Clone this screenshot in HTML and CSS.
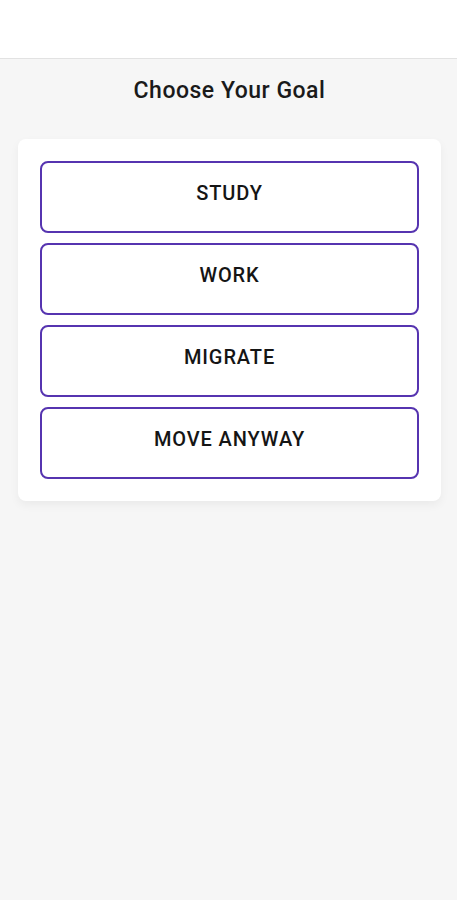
FILE: index.html
```html
<!DOCTYPE html>
<html>
<head>
<meta charset="utf-8">
<link rel="stylesheet" href="styles.css">
</head>
<body>
<header class="topbar"></header>
<main class="content">
  <h1 class="title">Choose Your Goal</h1>
  <section class="card">
    <button class="goal">STUDY</button>
    <button class="goal">WORK</button>
    <button class="goal">MIGRATE</button>
    <button class="goal">MOVE ANYWAY</button>
  </section>
</main>
</body>
</html>
```
FILE: styles.css
```css
html, body {
  margin: 0;
  padding: 0;
}
body {
  background: #f6f6f6;
  font-family: Roboto, "Noto Sans", "Liberation Sans", sans-serif;
  color: #151515;
  min-height: 900px;
}
.topbar {
  height: 58px;
  background: #ffffff;
  border-bottom: 1px solid #e2e2e2;
}
.content {
  padding: 0 16px 0 18px;
}
.title {
  margin: 0;
  padding-top: 19px;
  height: 61px;
  box-sizing: border-box;
  text-align: center;
  font-size: 23px;
  font-weight: 500;
  line-height: 26px;
  letter-spacing: 0.5px;
  color: #1a1a1a;
}
.card {
  margin-top: 19px;
  background: #ffffff;
  border-radius: 8px;
  padding: 22px;
  display: flex;
  flex-direction: column;
  gap: 10px;
  box-shadow: 0 4px 10px rgba(0, 0, 0, 0.05);
}
.goal {
  height: 72px;
  box-sizing: border-box;
  border: 2px solid #5634b0;
  border-radius: 8px;
  background: #ffffff;
  font-family: inherit;
  font-size: 20px;
  font-weight: 500;
  letter-spacing: 0.9px;
  color: #151515;
  padding: 0 0 8px 0;
  text-align: center;
  cursor: pointer;
}
```
